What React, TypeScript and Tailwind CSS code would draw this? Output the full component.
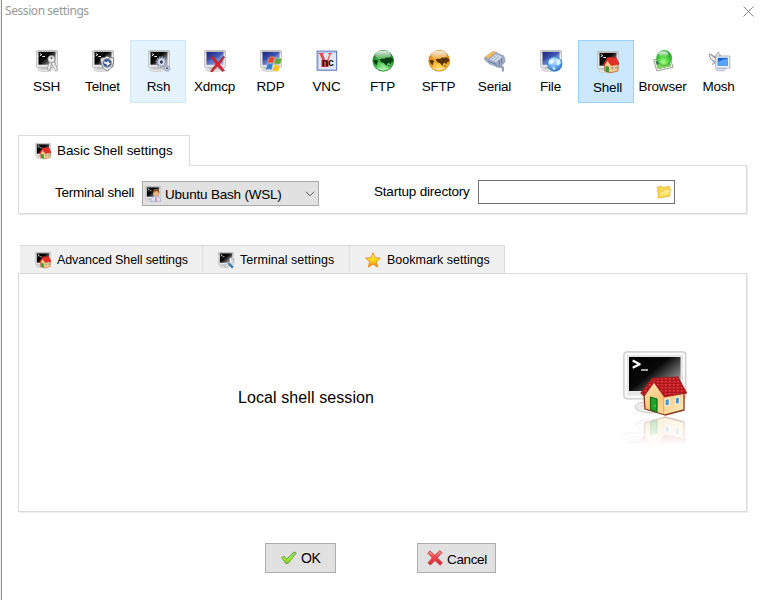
import type { ReactNode } from "react";

function Defs() {
  return (
    <svg width="0" height="0" className="absolute">
      <defs>
        <linearGradient id="screen" x1="0" y1="0" x2="1" y2=".8">
          <stop offset="0" stopColor="#000" /><stop offset=".48" stopColor="#080808" /><stop offset="1" stopColor="#b0b0b0" />
        </linearGradient>
        <linearGradient id="bezel" x1="0" y1="0" x2="0" y2="1">
          <stop offset="0" stopColor="#c4c4c4" /><stop offset=".3" stopColor="#ededed" /><stop offset="1" stopColor="#e4e4e4" />
        </linearGradient>
        <linearGradient id="blue" x1="0" y1="0" x2="1" y2="1">
          <stop offset="0" stopColor="#1d2478" /><stop offset=".5" stopColor="#4258b4" /><stop offset="1" stopColor="#c4d4f4" />
        </linearGradient>
        <radialGradient id="green" cx=".5" cy=".85" r=".9">
          <stop offset="0" stopColor="#9cf59c" /><stop offset=".5" stopColor="#35ad3c" /><stop offset="1" stopColor="#0d6a1b" />
        </radialGradient>
        <radialGradient id="lime" cx=".45" cy=".75" r=".8">
          <stop offset="0" stopColor="#b4ff8c" /><stop offset=".5" stopColor="#3ecb35" /><stop offset="1" stopColor="#1c9428" />
        </radialGradient>
        <radialGradient id="orange" cx=".5" cy=".85" r=".9">
          <stop offset="0" stopColor="#ffe070" /><stop offset=".5" stopColor="#f9a51c" /><stop offset="1" stopColor="#c87508" />
        </radialGradient>
        <radialGradient id="sky" cx=".4" cy=".3" r=".8">
          <stop offset="0" stopColor="#d5efff" /><stop offset=".5" stopColor="#66aef0" /><stop offset="1" stopColor="#2465b8" />
        </radialGradient>
        <linearGradient id="gloss" x1="0" y1="0" x2="0" y2="1">
          <stop offset="0" stopColor="#fff" stopOpacity=".9" /><stop offset="1" stopColor="#fff" stopOpacity=".1" />
        </linearGradient>
        <linearGradient id="star" x1="0" y1="0" x2="0" y2="1">
          <stop offset="0" stopColor="#fff176" /><stop offset=".5" stopColor="#ffd91a" /><stop offset="1" stopColor="#ff7b12" />
        </linearGradient>
        <linearGradient id="folder" x1="0" y1="0" x2="0" y2="1">
          <stop offset="0" stopColor="#fff6a8" /><stop offset="1" stopColor="#fbd64a" />
        </linearGradient>
        <linearGradient id="check" x1="0" y1="0" x2="0" y2="1">
          <stop offset="0" stopColor="#8cd46e" /><stop offset=".6" stopColor="#a5ee2b" /><stop offset="1" stopColor="#86c91b" />
        </linearGradient>
        <linearGradient id="cross" x1="0" y1="0" x2="0" y2="1">
          <stop offset="0" stopColor="#f59a9a" /><stop offset=".4" stopColor="#ee4a4f" /><stop offset="1" stopColor="#dc2630" />
        </linearGradient>
        <linearGradient id="wall" x1="0" y1="0" x2="1" y2="1">
          <stop offset="0" stopColor="#ffe7b5" /><stop offset=".5" stopColor="#ffc77c" /><stop offset="1" stopColor="#fff0c8" />
        </linearGradient>
        <linearGradient id="fade" x1="0" y1="0" x2="0" y2="1">
          <stop offset="0" stopColor="#fff" stopOpacity=".68" /><stop offset="1" stopColor="#fff" />
        </linearGradient>
        <pattern id="tiles" width="4" height="3" patternUnits="userSpaceOnUse">
          <rect width="4" height="3" fill="#cf2025" /><path d="M0 2.5h4M1 0v2" stroke="#971419" strokeWidth=".7" />
          <path d="M2 .7h1.5" stroke="#f0545a" strokeWidth=".7" />
        </pattern>
      </defs>
    </svg>
  );
}

function Icon({ size = 22, children }: { size?: number; children: ReactNode }) {
  return <svg width={size} height={size} viewBox="0 0 22 22" className="block shrink-0 overflow-visible">{children}</svg>;
}

function Monitor({ blue = false }: { blue?: boolean }) {
  return (
    <g>
      <ellipse cx="9" cy="19.6" rx="7.6" ry="2" fill="#e4e4e4" stroke="#b8b8b8" strokeWidth=".5" />
      <path d="M5.5 17h9l1 2.5h-11z" fill="#c4c4c4" />
      <rect x=".5" y=".5" width="21" height="17" rx="1" fill="url(#bezel)" stroke="#b4b4b4" strokeWidth=".7" />
      <rect x="2.5" y="1.9" width="17" height="12.8" fill={blue ? "url(#blue)" : "url(#screen)"} />
      {!blue && <path d="M3.7 3.4l2.2 1.2-2.2 1.2M6.3 6.5h2.7" fill="none" stroke="#eee" strokeWidth="1" />}
      {blue && <path d="M3 11c4 0 5-4 9-3s4-4 7-4v10.4H3z" fill="#7794dc" opacity=".45" />}
    </g>
  );
}

function SmallHouse() {
  return (
    <g strokeLinejoin="round">
      <path d="M7.6 13l3.4-5 10 4v8l-7.6 1.8-5.8-1.9z" fill="#ffc98a" stroke="#b5622e" strokeWidth=".8" />
      <path d="M6.2 14l4.3-7.6h8.6l3 6.7-7.7 1.4-4.2-5.2-3.1 5.4z" fill="#e03128" stroke="#b81f1c" strokeWidth=".6" />
      <path d="M8.8 15.2l2.9.8v5.1l-2.9-.9z" fill="#27a52f" stroke="#176719" strokeWidth=".4" />
      <path d="M14.6 16.3l1.8-.3v2.2l-1.8.3zm3.7-.6l1.5-.3v2.1l-1.5.3z" fill="#6ba0bd" />
    </g>
  );
}

const ShellIcon = ({ size }: { size?: number }) => <Icon size={size}><Monitor /><SmallHouse /></Icon>;

function Globe({ color }: { color: string }) {
  const green = color === "green";
  return (
    <Icon>
      <circle cx="11.2" cy="10.8" r="10.4" fill={green ? "url(#green)" : "url(#orange)"} stroke={green ? "#287c34" : "#c07c13"} strokeWidth=".7" />
      <ellipse cx="11" cy="5.3" rx="7.9" ry="4.5" fill="url(#gloss)" />
      <path d="M1.3 10.6l2.7-.8 2.4 1.5-1.2 1.5-.6 2.6-1.9-1.8zM7.5 9.5l2.7-1.1 2 .5 1.3-1.5 2.5.4 1.9-.5 2.7 1.5.8 2.8-2.1.1-.6 2.5-1.9-1.5-1.5.8-.9 2.5-2.3-2.8-2.5-.7zM15.5 15.7l2.2-.6-.6 1.7z" fill={green ? "#093f14" : "#593509"} />
      <path d="M5 18q6 3 12 0" fill="none" stroke="#fff" opacity=".55" />
    </Icon>
  );
}

function Gear({ x, y, r }: { x: number; y: number; r: number }) {
  return (
    <g>
      <circle cx={x} cy={y} r={r} fill="none" stroke="#8d98b4" strokeWidth={r * 0.45} strokeDasharray="1.5 .9" />
      <circle cx={x} cy={y} r={r * 0.8} fill="#dfe6f3" stroke="#a0abc8" strokeWidth="1" />
      <circle cx={x} cy={y} r={r * 0.36} fill="#384360" />
    </g>
  );
}

const icons: Record<string, ReactNode> = {
  SSH: <Icon><Monitor /><g fill="#eee" stroke="#888" strokeWidth=".7"><path d="M14 10.5l-3 8.8 2.6 1.2 2.5-8zm2-.2l3.3 3-.6 1.2 2.1 1.6-.3 1.2 1.2 3-2 1-4.4-7.8z" /><circle cx="15.4" cy="9" r="3.5" /><circle cx="15.5" cy="8" r=".9" fill="#444" /></g></Icon>,
  Telnet: <Icon><Monitor /><path d="M15 6q3 2.5 6.6 1.9c.5 6.4-1.6 10.6-6.3 13C10.8 18.7 8.4 14.6 8.8 8q3.9.4 6.2-2z" fill="#ededed" stroke="#777" strokeWidth=".9" /><circle cx="15.2" cy="13" r="4.4" fill="#35517f" stroke="#9ba7b9" strokeWidth="1.2" /><path d="M12 11.3l3 1 1-2 1.2 2.6 1.8.5-3 1.8-.6 1.4-1-2.4-2.2-.8z" fill="#e6edfa" /></Icon>,
  Rsh: <Icon><Monitor /><Gear x={13.4} y={12} r={4.7} /><Gear x={19} y={18.3} r={2.8} /></Icon>,
  Xdmcp: <Icon><Monitor blue /><path d="M6.3 7.1l2.8-.6 5 6 5.2-6 1.4.5-5.3 7.3 5.2 6.2-2.3 1-4.8-5.5-5.3 5.9-1.7-.6 5.6-7.4z" fill="#df202d" stroke="#951e2b" strokeWidth=".6" /></Icon>,
  RDP: <Icon><Monitor blue /><g stroke="#fff" strokeWidth=".3"><path d="M8.8 7.8q3-2.2 6-.5l-1.5 5.9q-3-1.4-6 .5z" fill="#e54824" /><path d="M15.5 7.7q3 1.7 6.5 0l-1.5 6q-3.3 1.6-6.5-.3z" fill="#62ab2c" /><path d="M7 14.5q3-2 6-.5l-1.4 6q-3-1.6-6 .2z" fill="#347fd2" /><path d="M14.1 14.3q2.8 1.8 6.2.2L18.8 21q-3.2 1.4-6.3-.4z" fill="#f8c51d" /></g></Icon>,
  VNC: <Icon><rect x="1.2" y="1.2" width="19.4" height="19" fill="#dfe7f9" stroke="#6683bc" strokeWidth="1.2" /><path d="M2.4 19.4V2.4H20" fill="none" stroke="#b8c8ea" /><path d="M5.5 10h7v7h-7z" fill="#c82432" /><text x="2.4" y="15.7" fontFamily="Liberation Sans,sans-serif" fontWeight="700"><tspan fontFamily="Liberation Serif,serif" fontSize="19" fill="#ea4755">V</tspan><tspan dx="-10.5" fontSize="10.5" fill="#111">nc</tspan></text></Icon>,
  FTP: <Globe color="green" />,
  SFTP: <Globe color="orange" />,
  Serial: <Icon><path d="M.8 7.2l7.8-5.8 4.4.6-9.3 7.5z" fill="#f6b95a" stroke="#c8a577" strokeWidth=".6" /><path d="M.6 7.5l3.7 1.5 7.8-6.3 7.7 3.2 1.4 5.5-5.2 6.3-10.6-3.9-4.6-4z" fill="#a0adc7" stroke="#8794af" strokeWidth=".7" /><path d="M5.5 9.4l6-5.2 6.6 2.4-5.9 5.3z" fill="#d3dbe8" /><path d="M7.5 9.7l5-4.2M10 10.6l5-4.3" stroke="#96a3bd" strokeWidth=".9" /><path d="M4 11l8 3.3.3 1.7M15.2 10v5M17.4 8.5l.3 5" stroke="#66748f" strokeWidth=".9" fill="none" /><path d="M12 16.2l4.5.2 2.4 1.3v3.7" fill="none" stroke="#929db8" strokeWidth="2.1" /></Icon>,
  File: <Icon><Monitor blue /><circle cx="14.7" cy="14" r="7.3" fill="url(#sky)" stroke="#347cba" strokeWidth=".7" /><path d="M9.2 10.5l3.8-1.6.5 3-2.1 2.3-2.9-1.2zm6-.8l4.3-.8 1.5 4-2.6 2.6-2-1.3.2-2.4zm-2.5 7l3 1.2-1.3 2-1.6-.6z" fill="#eaf7ff" opacity=".9" /></Icon>,
  Shell: <ShellIcon />,
  Browser: <Icon><path d="M1.7 9.8L17.5 8l3.8 9.2L4.8 21z" fill="#f5f5f3" stroke="#8c9889" strokeWidth=".9" /><path d="M3.5 11L16.4 9.4l2.7 6.5L6 19z" fill="#39714a" /><path d="M4.8 14.8l4.7-1.3 4 1.3 4-.8 1.6 1.9L6 19z" fill="#83d45b" /><circle cx="12.2" cy="8" r="7.6" fill="url(#lime)" stroke="#31993e" strokeWidth=".6" /><ellipse cx="11.3" cy="4.2" rx="4.9" ry="2.9" fill="url(#gloss)" /></Icon>,
  Mosh: <Icon><path d="M1.5 4q2.6 0 5.4 3.1T9.4 11.5Q5 12 2.7 9T1.5 4zM4.5 11L7 13l-3 1.5" fill="#e9e9e9" stroke="#777" strokeWidth=".7" /><path d="M3 5l4.2 2.6M6.6 7.6l3.6-5.5M6.6 7.6l5.9-2M10.2 2.1l2.3 3.5" fill="none" stroke="#777" strokeWidth=".7" /><ellipse cx="12.5" cy="19.5" rx="5" ry="1.5" fill="#dbe3ed" stroke="#8995a6" strokeWidth=".5" /><rect x="7.7" y="6" width="14.1" height="12.2" rx=".5" fill="#edf1f7" stroke="#8e9bb0" strokeWidth=".7" /><rect x="9.7" y="7.8" width="10" height="7.9" fill="#1b5fd0" /><path d="M9.7 12q5-3 10-3.2v6.9h-10z" fill="#56a5f4" /></Icon>,
};

function UserIcon() {
  return <Icon size={16}><Monitor /><path d="M8 21v-3l4.5-4h5l4 4v3z" fill="#dce8ff" stroke="#798fb8" strokeWidth=".7" /><circle cx="15" cy="10" r="4" fill="#efb47c" /><path d="M11 10q-1-6 4-6 6 0 4.5 7-1-4-4-4z" fill="#8d562e" /><path d="M15 15v6" stroke="#ee5262" strokeWidth="1.6" /></Icon>;
}

function WrenchIcon() {
  return <Icon size={16}><Monitor /><path d="M9 20l7.4-7-1-4 4-2.2-.7 3.3 2.3 1.4L21.6 9l.4 4-4 2-7 6.5z" fill="#eee" stroke="#969696" strokeWidth=".7" /><path d="M14.5 15.5l6 6" stroke="#2a7bbf" strokeWidth="3" /></Icon>;
}

function Scene() {
  return (
    <g strokeLinejoin="round">
      <ellipse cx="29" cy="56" rx="17" ry="6" fill="#ececec" stroke="#cacaca" />
      <path d="M21 47h20v9H18z" fill="#dedede" />
      <rect x=".8" y=".8" width="62" height="47" rx="3" fill="#f2f2f2" stroke="#cacaca" strokeWidth="1.2" />
      <rect x="3.2" y="3" width="57.4" height="42.5" rx="1.5" fill="#e6e6e6" stroke="#fff" strokeWidth="1.3" />
      <rect x="6" y="6" width="51.5" height="34" fill="url(#screen)" />
      <path d="M9.7 9.5l7 3.7-7 3.5" fill="none" stroke="#fff" strokeWidth="2.2" /><path d="M18 19h7" stroke="#ccc" strokeWidth="1.6" />
      <path d="M21 43l10.5-14L43 43l18-3v19l-19 5-20-6z" fill="url(#wall)" stroke="#8b3817" strokeWidth="1.3" />
      <path d="M40.7 43.5V63" stroke="#e6a568" />
      <path d="M18 42L29.2 27.4 54.8 26 63.5 42 41.5 45.7 31 30.8 21.2 44.7z" fill="url(#tiles)" stroke="#a31c20" strokeWidth="1.2" />
      <path d="M27.5 46l6.5 2v13l-6.5-2.4z" fill="#20a52c" stroke="#107018" strokeWidth="1.2" />
      <circle cx="32" cy="55" r=".7" fill="#e5d75c" />
      <path d="M42 48.3l4.4-.8v6.8l-4.4.8zM52.2 46.6l4.3-.7v6.8l-4.3.7z" fill="#379be1" stroke="#fff2d2" strokeWidth="1.2" />
    </g>
  );
}

function Tool({ name, border = "" }: { name: string; border?: string }) {
  return (
    <button className={`flex h-[63px] w-14 shrink-0 flex-col items-center border ${name === "Shell" ? "pl-[3px] pt-[10px]" : "pl-px pt-[9px]"} ${border || "border-transparent"}`}>
      {icons[name]}
      <span className="mt-[6px] text-[13.5px] leading-[17px] tracking-[-0.2px]">{name}</span>
    </button>
  );
}

export default function App() {
  return (
    <main className="h-[600px] w-[763px] overflow-hidden border-l border-[#eee] bg-white font-['Liberation_Sans',Arial,sans-serif] text-[13.5px] text-black">
      <Defs />
      <div className="h-full border-l border-[#929292] pl-4">
        <header className="-ml-4 flex h-10 items-start justify-between pl-[3px] pr-[9px] font-['Noto_Sans','Open_Sans',sans-serif] text-[12px] text-[#999]">
          <h1 className="pt-[3px] leading-4 tracking-[-0.43px]">Session settings</h1>
          <svg width="11" height="11" viewBox="0 0 11 11" className="mt-[6px]"><path d="M.5.5l10 10m0-10l-10 10" stroke="#888" fill="none" /></svg>
        </header>
        <nav className="flex h-[63px]">
          {Object.keys(icons).map((name) => <Tool key={name} name={name} border={name === "Rsh" ? "border-[#cce8ff] bg-[#e5f3ff]" : name === "Shell" ? "border-[#99d1ff] bg-[#cce8ff]" : ""} />)}
        </nav>

        <section className="mt-8 w-[729px]">
          <div className="relative z-10 flex h-[31px] w-[172px] items-center border border-b-0 border-[#dadada] bg-white pl-4">
            <ShellIcon size={16} /><span className="ml-[6px] tracking-[-0.07px]">Basic Shell settings</span>
          </div>
          <div className="-mt-px flex h-[49px] border border-[#dadada] pl-9 shadow-[1px_1px_0_#eee]">
            <span className="mt-[18px] w-[87px] leading-[17px] tracking-[-0.26px]">Terminal shell</span>
            <button className="mt-[15px] flex h-[25px] w-[177px] items-center border border-[#a9a9a9] bg-[#e1e1e1] pl-[2px]">
              <UserIcon /><span className="ml-[4px] pt-[2px] leading-[17px] tracking-[-0.2px]">Ubuntu Bash (WSL)</span>
              <svg width="10" height="6" viewBox="0 0 10 6" className="ml-auto mr-[3px]"><path d="M1 .8l4 4 4-4" stroke="#555" fill="none" /></svg>
            </button>
            <span className="ml-[55px] mt-[17px] w-[104px] leading-[17px] tracking-[-0.2px]">Startup directory</span>
            <div className="mt-[14px] flex h-6 w-[197px] items-center justify-end border border-[#707070] bg-white pr-[2px]">
              <svg width="16" height="16" viewBox="0 0 16 16"><path d="M1.2 3.2l4.3-.9 1.3 1.2 6.5-1.2 1 3-1 7-10.8 1.5z" fill="#f8d850" stroke="#e0b12e" strokeWidth=".7" /><path d="M1.8 13.8L4.5 7.3 8 7l1.3-1.4 5.5-.4-2 7z" fill="url(#folder)" stroke="#ebbb35" strokeWidth=".7" /></svg>
            </div>
          </div>
        </section>

        <section className="mt-[31px] w-[729px]">
          <div className="ml-[2px] flex h-7 w-[485px] border-y border-r border-t-[#dadada] border-r-[#dadada] border-b-[#f0f0f0] bg-[#f0f0f0] text-[12.5px]">
            <div className="flex w-[183px] items-center border-r border-[#dadada] pl-[15px] pt-[2px]"><ShellIcon size={16} /><span className="ml-[6px] tracking-[-0.11px]">Advanced Shell settings</span></div>
            <div className="flex w-[147px] items-center border-r border-[#dadada] pl-[15px] pt-[2px]"><WrenchIcon /><span className="ml-[6px] tracking-[0.03px]">Terminal settings</span></div>
            <div className="flex items-center pl-[15px] pt-[2px]"><svg width="16" height="16" viewBox="0 0 16 16"><path d="M8 .7l2.1 5 5.3.4-4 3.6 1.2 5.4L8 12.2l-4.6 2.9 1.2-5.4-4-3.6 5.3-.4z" fill="url(#star)" stroke="#de8a27" strokeWidth=".9" strokeLinejoin="round" /></svg><span className="ml-[6px]">Bookmark settings</span></div>
          </div>
          <div className="flex h-[239px] border border-[#dadada] shadow-[1px_1px_0_#eee]">
            <p className="ml-[219px] mt-[114px] w-[385px] text-[16px] leading-5 tracking-[0.09px]">Local shell session</p>
            <svg width="64" height="100" viewBox="0 0 64 100" className="mt-[77px] shrink-0">
              <Scene /><g transform="translate(0 130) scale(1 -1)"><Scene /></g>
              <rect x="-2" y="65" width="68" height="29" fill="url(#fade)" /><path d="M0 94h64v6H0z" fill="#fff" />
            </svg>
          </div>
        </section>

        <footer className="ml-[247px] mt-[31px] flex gap-[81px]">
          <button className="flex h-[30px] w-[71px] items-center border border-[#adadad] bg-[#e1e1e1] pl-[15px]">
            <svg width="16" height="16" viewBox="0 0 16 16"><path d="M.7 7.4l2.7-1.1 2.4 3L12.8 2l2.5 1L7 13.5H4.8z" fill="url(#check)" stroke="#57a13a" strokeWidth=".9" strokeLinejoin="round" /></svg><span className="ml-1 text-[14px] tracking-[-0.4px]">OK</span>
          </button>
          <button className="flex h-[30px] w-[79px] items-center border border-[#adadad] bg-[#e1e1e1] pl-[9px]">
            <svg width="16" height="16" viewBox="0 0 16 16"><path d="M.7 3l2.4-2.1 4.7 4.4L12.7.8l2.4 1.7-4.8 5.3 5 5-2.1 2.4-5.2-4.7L3.5 15l-2.6-2 4.4-5.1z" fill="url(#cross)" stroke="#c64044" strokeWidth=".9" strokeLinejoin="round" /></svg><span className="ml-1 pt-[2px] leading-[17px] tracking-[-0.35px]">Cancel</span>
          </button>
        </footer>
      </div>
    </main>
  );
}
